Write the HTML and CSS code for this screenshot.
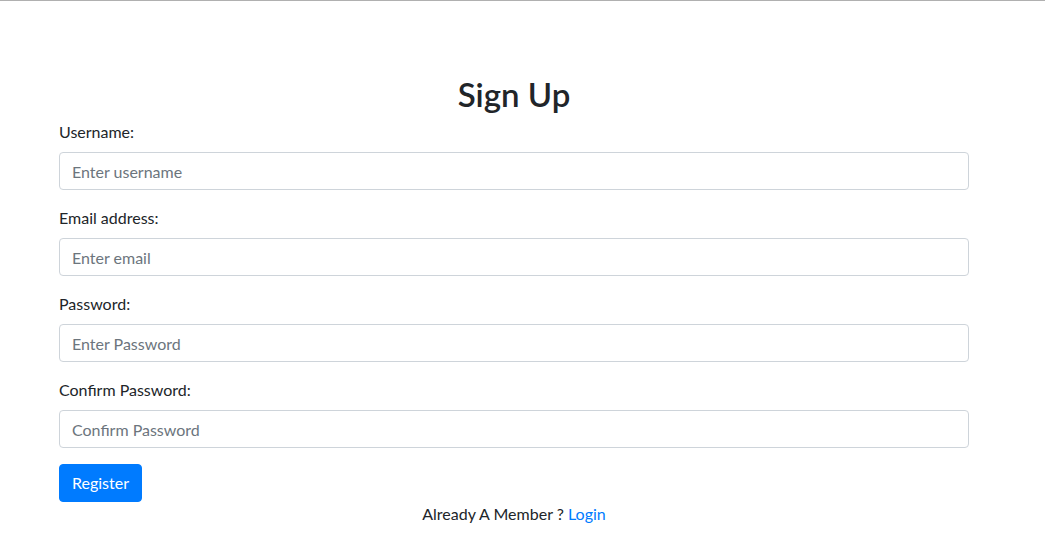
FILE: index.html
```html
<!DOCTYPE html>
<html>
<head>
<meta charset="utf-8">
<link rel="stylesheet" href="styles.css">
</head>
<body>
<div class="topline"></div>
<main class="container">
  <h2 class="title">Sign Up</h2>
  <form class="form">
    <div class="group">
      <label class="label">Username:</label>
      <input class="input" type="text" placeholder="Enter username">
    </div>
    <div class="group">
      <label class="label">Email address:</label>
      <input class="input" type="email" placeholder="Enter email">
    </div>
    <div class="group">
      <label class="label">Password:</label>
      <input class="input" type="password" placeholder="Enter Password">
    </div>
    <div class="group">
      <label class="label">Confirm Password:</label>
      <input class="input" type="password" placeholder="Confirm Password">
    </div>
    <button class="btn" type="button">Register</button>
  </form>
  <p class="member">Already A Member ? <a class="link" href="#">Login</a></p>
</main>
</body>
</html>
```
FILE: styles.css
```css
* { box-sizing: border-box; }
html, body { margin: 0; padding: 0; background: #fff; }
body {
  font-family: "Lato", "Liberation Sans", sans-serif;
  font-size: 16px;
  line-height: 1.5;
  color: #212529;
}
.topline { height: 1px; background: #b0b0b0; }
.container {
  width: 910px;
  margin-left: 59px;
  padding-top: 73px;
}
.title {
  margin: 0 0 6px;
  font-size: 33px;
  font-weight: 600;
  line-height: 40px;
  text-align: center;
}
.form { margin: 0; }
.group { margin-bottom: 16px; }
.label { display: block; margin-bottom: 8px; }
.input {
  display: block;
  width: 100%;
  height: 38px;
  padding: 6px 12px;
  font: inherit;
  color: #495057;
  border: 1px solid #ced4da;
  border-radius: 4px;
  background: #fff;
}
.input::placeholder { color: #6c757d; opacity: 1; }
.btn {
  display: block;
  height: 38px;
  padding: 6px 12px;
  font: inherit;
  color: #fff;
  background: #007bff;
  border: 1px solid #007bff;
  border-radius: 4px;
}
.member { margin: 0; text-align: center; }
.link { color: #007bff; text-decoration: none; }
```
